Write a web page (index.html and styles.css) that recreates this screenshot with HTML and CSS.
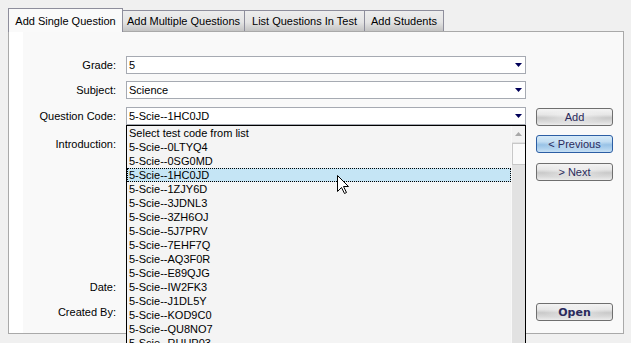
FILE: index.html
```html
<!DOCTYPE html>
<html lang="en">
<head>
    <meta charset="UTF-8">
    <meta name="viewport" content="width=device-width, initial-scale=1.0">
    <title>Add Single Question</title>
    <link rel="stylesheet" href="styles.css">
</head>
<body>
    <div class="tabs">
        <div class="tab active tab-single">Add Single Question</div>
        <div class="tab tab-multiple">Add Multiple Questions</div>
        <div class="tab tab-list">List Questions In Test</div>
        <div class="tab tab-students">Add Students</div>
    </div>
    <div class="panel">
        <div class="content">
            <div class="form">
                <div class="row row-grade">
                    <label>Grade:</label>
                    <div class="select">5<span class="arrow"></span></div>
                </div>
                <div class="row row-subject">
                    <label>Subject:</label>
                    <div class="select">Science<span class="arrow"></span></div>
                </div>
                <div class="row row-code">
                    <label>Question Code:</label>
                    <div class="select open">5-Scie--1HC0JD<span class="arrow"></span>
                        <div class="dropdown">
                            <ul class="options">
                                <li>Select test code from list</li>
                                <li>5-Scie--0LTYQ4</li>
                                <li>5-Scie--0SG0MD</li>
                                <li class="selected">5-Scie--1HC0JD</li>
                                <li>5-Scie--1ZJY6D</li>
                                <li>5-Scie--3JDNL3</li>
                                <li>5-Scie--3ZH6OJ</li>
                                <li>5-Scie--5J7PRV</li>
                                <li>5-Scie--7EHF7Q</li>
                                <li>5-Scie--AQ3F0R</li>
                                <li>5-Scie--E89QJG</li>
                                <li>5-Scie--IW2FK3</li>
                                <li>5-Scie--J1DL5Y</li>
                                <li>5-Scie--KOD9C0</li>
                                <li>5-Scie--QU8NO7</li>
                                <li>5-Scie--RHHP03</li>
                            </ul>
                            <div class="scrollbar">
                                <div class="scroll-up"><span class="up-arrow"></span></div>
                                <div class="thumb"></div>
                            </div>
                        </div>
                    </div>
                </div>
                <div class="row row-intro">
                    <label>Introduction:</label>
                    <div class="field"></div>
                </div>
                <div class="row row-date">
                    <label>Date:</label>
                    <div class="field"></div>
                </div>
                <div class="row row-created">
                    <label>Created By:</label>
                    <div class="field"></div>
                </div>
            </div>
            <div class="actions">
                <button class="btn btn-add">Add</button>
                <button class="btn btn-prev">&lt; Previous</button>
                <button class="btn btn-next">&gt; Next</button>
                <button class="btn btn-open">Open</button>
            </div>
        </div>
    </div>

    <!-- mouse pointer over the open list -->
    <svg class="cursor" width="13" height="20" viewBox="0 0 13 20">
        <path d="M0.5 0.5 L0.5 16.5 L4.5 12.5 L7.5 18.5 L9.5 17.5 L6.5 11.5 L11.5 11.5 Z" fill="#fff" stroke="#000" stroke-width="1"/>
    </svg>
</body>
</html>
```

FILE: styles.css
```css
html, body {
    overflow: hidden;
}
body {
    margin: 0;
    padding: 8px;
    height: 343px;
    box-sizing: border-box;
    background-color: #f0f0f0;
    font-family: "Liberation Sans", Arial, sans-serif;
    font-size: 11px;
    color: #000;
    position: relative;
}

/* tabs */
.tabs {
    display: flex;
    align-items: flex-end;
    height: 23px;
}
.tab {
    box-sizing: border-box;
    height: 21px;
    line-height: 20px;
    text-align: center;
    border: 1px solid #8e8e9c;
    border-left: none;
    border-bottom: none;
    background: linear-gradient(#ededed 0%, #e4e4e4 55%, #d2d2d2 80%, #c4c4c4 100%);
}
.tab.active {
    height: 24px;
    line-height: 24px;
    margin-bottom: -1px;
    border-left: 1px solid #8e8e9c;
    background: #fafafa;
    position: relative;
    z-index: 1;
}
.tab-single { width: 115px; }
.tab-multiple { width: 122px; }
.tab-list { width: 120px; }
.tab-students { width: 79px; }

/* panel */
.panel {
    box-sizing: border-box;
    width: 616px;
    height: 303px;
    border: 1px solid #a9a9a9;
    background: #fff;
    padding-left: 14px;
}
.content {
    display: flex;
    height: 100%;
    background: #f9f9f9;
}

/* form rows */
.form {
    width: 503px;
}
.row {
    display: flex;
    align-items: center;
    height: 18px;
}
.row label {
    width: 93px;
    text-align: right;
    margin-right: 10px;
    flex-shrink: 0;
}
.row-grade { margin-top: 24px; }
.row-subject { margin-top: 7px; }
.row-code { margin-top: 8px; position: relative; z-index: 2; }
.row-intro {
    margin-top: 10px;
    height: 136px;
    align-items: flex-start;
    line-height: 18px;
}
.row-date { margin-top: 7px; }
.row-created { margin-top: 7px; }

.select {
    box-sizing: border-box;
    width: 400px;
    height: 18px;
    line-height: 16px;
    padding-left: 2px;
    border: 1px solid #a6aab2;
    background: #fff;
    position: relative;
}
.arrow {
    position: absolute;
    right: 3px;
    top: 6px;
    width: 7px;
    height: 4px;
    background: #000058;
    clip-path: polygon(0 0, 100% 0, 50% 100%);
}
.field {
    width: 400px;
    height: 100%;
}

/* open list */
.dropdown {
    position: absolute;
    top: 17px;
    left: -1px;
    width: 400px;
    height: 232px;
    box-sizing: border-box;
    border: 1px solid #000;
    background: #f4f4f4;
    display: flex;
}
.options {
    list-style: none;
    margin: 0;
    padding: 0;
    width: 384px;
}
.options li {
    height: 14px;
    box-sizing: border-box;
    line-height: 12px;
    padding-left: 1px;
    border: 1px dotted transparent;
    white-space: nowrap;
}
.options li.selected {
    background: #c5e5f5;
    border-color: #000;
}
.scrollbar {
    width: 14px;
    background: #e2e2e2;
    border-left: 1px solid #f8f8f8;
    box-sizing: border-box;
    margin-left: auto;
}
.scroll-up {
    height: 16px;
    background: #f2f2f2;
    position: relative;
}
.up-arrow {
    position: absolute;
    left: 3px;
    top: 6px;
    width: 7px;
    height: 4px;
    background: #a8a8a8;
    clip-path: polygon(50% 0, 100% 100%, 0 100%);
}
.thumb {
    margin-top: 1px;
    height: 22px;
    background: #fafafa;
    border: 1px solid #c8c8c8;
    border-right: none;
    box-sizing: border-box;
}

/* buttons */
.actions {
    display: flex;
    flex-direction: column;
    width: 77px;
    margin-left: 10px;
}
.btn {
    box-sizing: border-box;
    width: 77px;
    height: 18px;
    padding: 0;
    border: 1px solid #6f6f6f;
    border-radius: 3px;
    font-family: "Liberation Sans", Arial, sans-serif;
    font-size: 11px;
    color: #2a2a5c;
    line-height: 15px;
    background:
        radial-gradient(ellipse at center, rgba(255,255,255,0.55) 0%, rgba(255,255,255,0) 60%),
        linear-gradient(#f4f4f4 0%, #e6e6e6 35%, #c9c9c9 55%, #dadada 80%, #ececec 100%);
}
.btn-add { margin-top: 76px; }
.btn-prev {
    margin-top: 9px;
    border-color: #2c5ea4;
    background:
        radial-gradient(ellipse at center, rgba(255,255,255,0.45) 0%, rgba(255,255,255,0) 60%),
        linear-gradient(#d6eaf8 0%, #c2ddf2 35%, #98c2e6 55%, #b0d2ee 80%, #c8e0f4 100%);
}
.btn-next { margin-top: 10px; }
.btn-open {
    margin-top: 122px;
    font-family: "DejaVu Sans", Verdana, sans-serif;
    font-weight: bold;
}

.cursor {
    position: absolute;
    left: 337px;
    top: 175px;
    z-index: 5;
}
```
